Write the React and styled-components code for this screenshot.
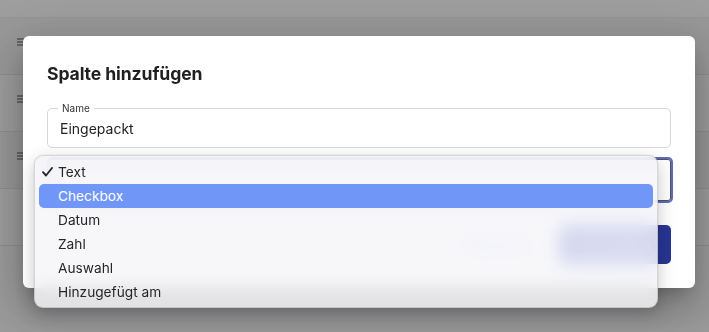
import React from "react";
import styled, { createGlobalStyle } from "styled-components";

const GlobalStyle = createGlobalStyle`
  html, body { margin: 0; padding: 0; }
  body {
    width: 709px;
    height: 332px;
    overflow: hidden;
    font-family: Inter, "Noto Sans", "Liberation Sans", sans-serif;
    background: #ffffff;
  }
`;

const Page = styled.div`
  position: relative;
  width: 709px;
  height: 332px;
  overflow: hidden;
  background: #fafafa;
`;

const TopStrip = styled.div`
  height: 17px;
  background: #ffffff;
  border-bottom: 1px solid #eeeeee;
`;

const Row = styled.div`
  display: flex;
  align-items: flex-start;
  box-sizing: border-box;
  height: 57px;
  padding: 20px 0 0 17px;
  background: ${(p) => (p.$alt ? "#fdfdfd" : "#f6f6f6")};
  border-bottom: 1px solid #e6e6e6;
`;

const Overlay = styled.div`
  position: absolute;
  inset: 0;
  background: rgba(0, 0, 0, 0.38);
`;

const Dialog = styled.div`
  position: absolute;
  left: 23px;
  top: 36px;
  width: 672px;
  height: 252px;
  box-sizing: border-box;
  padding: 26px 24px 24px;
  background: #ffffff;
  border-radius: 6px;
  box-shadow: 0 11px 15px -7px rgba(0, 0, 0, 0.2),
    0 24px 38px 3px rgba(0, 0, 0, 0.14), 0 9px 46px 8px rgba(0, 0, 0, 0.12);
  display: flex;
  flex-direction: column;
`;

const Title = styled.h2`
  margin: 0;
  font-size: 17.6px;
  line-height: 24px;
  font-weight: 700;
  color: #1f1f1f;
  letter-spacing: -0.1px;
`;

const Fields = styled.div`
  display: flex;
  flex-direction: column;
  gap: 9px;
  margin-top: 22px;
`;

const Field = styled.div`
  position: relative;
  height: ${(p) => p.$h}px;
  box-sizing: border-box;
  border: ${(p) => (p.$focused ? "2px solid #5c6bc0" : "1px solid #d8d8d8")};
  border-radius: 5px;
  display: flex;
  align-items: center;
  padding-left: 12px;
  font-size: 14px;
  color: #222;
  ${(p) => p.$focused && "box-shadow: inset 0 0 0 1px #555; margin-right: -2px;"}
`;

const FieldLabel = styled.span`
  position: absolute;
  left: 10px;
  top: -7px;
  padding: 0 4px;
  background: #ffffff;
  font-size: 10px;
  line-height: 12px;
  color: #333;
`;

const Actions = styled.div`
  display: flex;
  justify-content: flex-end;
  align-items: center;
  gap: 24px;
  margin-top: auto;
`;

const TextButton = styled.button`
  border: none;
  background: transparent;
  font-family: inherit;
  font-size: 13px;
  color: #7986cb;
  padding: 0 4px;
`;

const PrimaryButton = styled.button`
  width: 112px;
  height: 39px;
  border: none;
  border-radius: 5px;
  background: #283593;
  color: #ffffff;
  font-family: inherit;
  font-size: 13px;
`;

const Menu = styled.div`
  position: absolute;
  left: 34px;
  top: 155px;
  width: 624px;
  height: 153px;
  box-sizing: border-box;
  padding: 4px 4px 3px;
  border-radius: 9px;
  background: rgba(246, 246, 249, 0.84);
  backdrop-filter: blur(9px) saturate(1.4);
  border: 1px solid rgba(0, 0, 0, 0.13);
  box-shadow: 0 6px 18px rgba(0, 0, 0, 0.22), 0 0 2px rgba(0, 0, 0, 0.12);
  display: flex;
  flex-direction: column;
`;

const Item = styled.div`
  position: relative;
  height: 24px;
  flex: none;
  display: flex;
  align-items: center;
  padding-left: 19px;
  border-radius: 5px;
  font-size: 13.7px;
  color: ${(p) => (p.$active ? "#ffffff" : "#262626")};
  background: ${(p) => (p.$active ? "#7096f8" : "transparent")};
`;

const Check = styled.svg`
  position: absolute;
  left: 3px;
  top: 7px;
`;

const Lines = () => (
  <svg width="9" height="8" viewBox="0 0 9 8">
    <path d="M0 1h9M0 4h9M0 7h9" stroke="#555" strokeWidth="1.2" />
  </svg>
);

const options = ["Text", "Checkbox", "Datum", "Zahl", "Auswahl", "Hinzugefügt am"];

export default function App() {
  return (
    <>
      <GlobalStyle />
      <Page>
        <TopStrip />
        <Row>
          <Lines />
        </Row>
        <Row $alt>
          <Lines />
        </Row>
        <Row>
          <Lines />
        </Row>
        <Row $alt />
        <Overlay />
        <Dialog>
          <Title>Spalte hinzufügen</Title>
          <Fields>
            <Field $h={40}>
              <FieldLabel>Name</FieldLabel>
              Eingepackt
            </Field>
            <Field $h={46} $focused />
          </Fields>
          <Actions>
            <TextButton>Abbrechen</TextButton>
            <PrimaryButton>Hinzufügen</PrimaryButton>
          </Actions>
        </Dialog>
        <Menu>
          {options.map((o, i) => (
            <Item key={o} $active={i === 1}>
              {i === 0 && (
                <Check width="11" height="10" viewBox="0 0 11 10">
                  <path
                    d="M1 5.2l3 3.3L10 1"
                    fill="none"
                    stroke="#262626"
                    strokeWidth="1.9"
                    strokeLinecap="round"
                    strokeLinejoin="round"
                  />
                </Check>
              )}
              {o}
            </Item>
          ))}
        </Menu>
      </Page>
    </>
  );
}
